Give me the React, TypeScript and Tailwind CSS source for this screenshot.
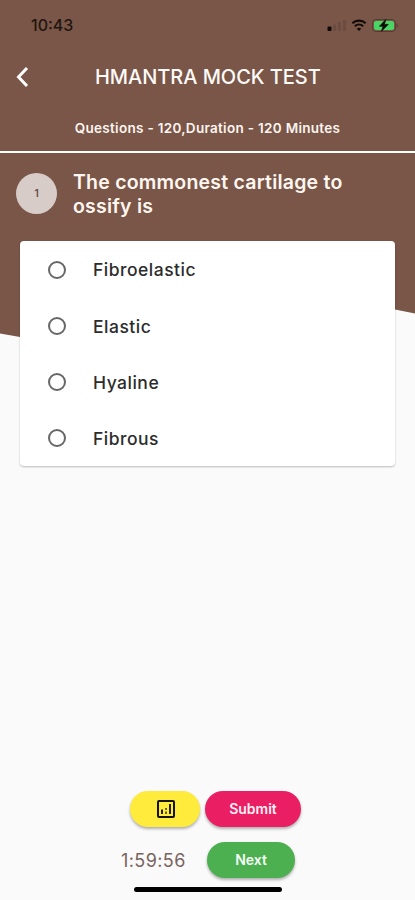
const options = ["Fibroelastic", "Elastic", "Hyaline", "Fibrous"];

function StatusBar() {
  return (
    <div className="flex h-[50px] items-center justify-between pl-[31px] pr-[17px]">
      <span className="text-[16px] leading-5 font-medium text-[#21150f]">10:43</span>
      <svg width="72" height="16" viewBox="326 17 72 16" fill="none">
        <rect x="327.5" y="26.5" width="4" height="4.5" rx="1" fill="#120a08" />
        <rect x="333" y="24.5" width="3" height="6.5" rx="1" fill="#6c4b40" />
        <rect x="338" y="22" width="3" height="9" rx="1" fill="#6c4b40" />
        <rect x="343" y="20" width="3" height="11" rx="1" fill="#6c4b40" />
        <path d="M352.3 23.3a9.6 9.6 0 0 1 13.4 0" stroke="#120a08" strokeWidth="2.1" />
        <path d="M354.9 26.2a6 6 0 0 1 8.2 0" stroke="#120a08" strokeWidth="2" />
        <path d="M359 31l-2.2-2.3a3.2 3.2 0 0 1 4.4 0z" fill="#120a08" />
        <rect x="372.5" y="19.5" width="23" height="12" rx="3.5" stroke="#563c32" />
        <rect x="374" y="21" width="20" height="9" rx="2" fill="#4bd565" />
        <path d="M396.7 23.5c1.5.5 1.5 3.5 0 4z" fill="#563c32" />
        <path d="M385.8 19.5l-6.3 6.7h3.7l-1.7 5 6.7-6.8h-3.9z" fill="#120a08" stroke="#120a08" strokeWidth=".8" />
      </svg>
    </div>
  );
}

export default function App() {
  return (
    <div className="relative isolate flex h-[900px] w-full flex-col overflow-hidden bg-[#fafafa] font-['Inter',sans-serif]">
      <svg className="absolute top-0 left-0 -z-10" width="415" height="340" viewBox="0 0 415 340">
        <path d="M0 0H415V313.5L395 309.5Q300 290 205 316Q110 350 20 337L0 333.5Z" fill="#795648" />
      </svg>

      <StatusBar />
      <header className="flex h-[54px] items-center">
        <svg className="ml-[15px] shrink-0" width="15" height="22" viewBox="0 0 15 22" fill="none">
          <path d="M12 2L3.5 11L12 20" stroke="#fff" strokeWidth="3" />
        </svg>
        <h1 className="ml-[65px] text-[20px] leading-6 font-medium tracking-[-0.04px] whitespace-nowrap text-[#fffaf7]">HMANTRA MOCK TEST</h1>
      </header>
      <p className="flex h-[47px] items-center justify-center pt-px text-[13.5px] font-semibold tracking-[0.3px] whitespace-nowrap text-[#fff4ef]">
        <span>Questions - 120,Duration - 120 Minutes</span>
      </p>
      <div className="h-[2px] shrink-0 bg-white" />

      <section className="flex h-[88px] items-start pt-[17px] pl-4">
        <span className="mt-[3px] flex size-[41px] items-center justify-center rounded-full bg-[#d7ccc8] text-[10px] font-semibold text-[#5b4b46]">1</span>
        <h2 className="ml-4 w-[300px] text-[19.5px] leading-6 font-semibold tracking-[0.22px] text-[#fff6f0]">
          The commonest cartilage to<br />ossify is
        </h2>
      </section>

      <main className="mx-5 h-[225px] shrink-0 rounded-[4px] bg-white pt-[0.5px] shadow-[0_1px_2px_rgba(0,0,0,0.25)]">
        {options.map((option) => (
          <label key={option} className="flex h-[56.2px] items-center pl-7">
            <span className="size-[18px] shrink-0 rounded-full border-2 border-[#686868]" />
            <span className="ml-[27px] pt-[2px] text-[17.5px] font-medium tracking-[0.5px] text-[#2c2c2c]">{option}</span>
          </label>
        ))}
      </main>

      <footer className="mt-auto flex h-[109px] flex-col">
        <div className="flex gap-[5px] pl-[130px]">
          <button className="flex h-9 w-[70px] items-center justify-center rounded-full bg-[#ffeb3b] pl-px shadow-[0_2px_3px_rgba(0,0,0,0.3)]">
            <svg width="18" height="18" viewBox="0 0 18 18" fill="none">
              <rect x="1" y="1" width="16" height="16" rx="1" stroke="#15130b" strokeWidth="2" />
              <path d="M5 9.5v4.500M13 4v10" stroke="#28220c" strokeWidth="2" />
              <path d="M9 11.5v2.500M9 8v2" stroke="#6b6117" strokeWidth="2" />
            </svg>
          </button>
          <button className="h-9 w-24 rounded-full bg-[#e91e63] pb-px text-[14px] font-semibold text-[#fff0f5] shadow-[0_2px_3px_rgba(0,0,0,0.3)]">Submit</button>
        </div>
        <div className="mt-[15px] flex items-center pl-[121px]">
          <span className="w-[86px] pt-0.5 text-[18px] leading-6 tracking-[0.4px] text-[#79645d]">1:59:56</span>
          <button className="h-9 w-[88px] rounded-full bg-[#4caf50] pb-px text-[14px] font-semibold text-[#f5fff5] shadow-[0_2px_3px_rgba(0,0,0,0.3)]">Next</button>
        </div>
        <div className="mt-[9px] ml-[134px] h-[5px] w-[148px] rounded-full bg-black" />
      </footer>
    </div>
  );
}
